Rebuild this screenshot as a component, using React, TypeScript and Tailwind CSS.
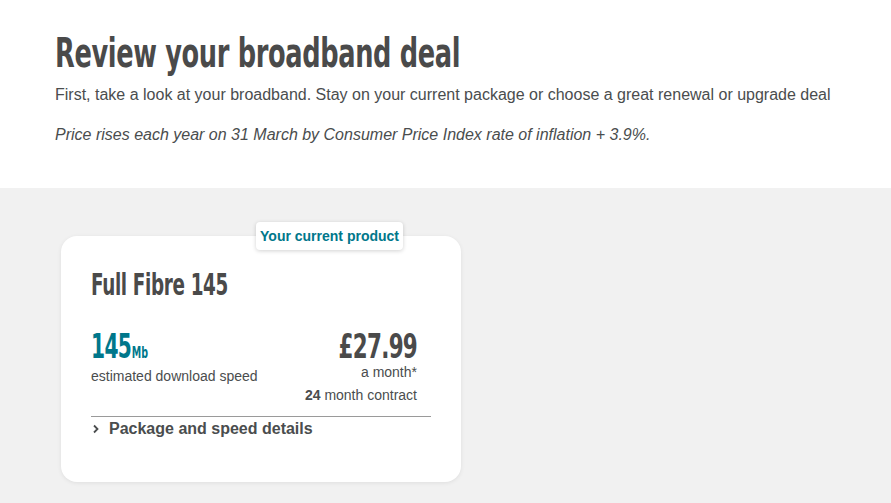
import React from "react";

const condensed = { fontFamily: '"DejaVu Sans Condensed", "DejaVu Sans", sans-serif' };

export default function App() {
  return (
    <div className="min-h-screen bg-[#f1f1f1] font-['Liberation_Sans',Arial,sans-serif] text-[#4a4d4e]">
      <header className="bg-white px-[55px] pt-[31px] pb-[41px]">
        <h1
          style={condensed}
          className="text-[40px] font-bold leading-[44px] tracking-[-0.5px] text-[#4a4a4a]"
        >
          <span className="inline-block origin-left scale-x-[0.713]">Review your broadband deal</span>
        </h1>
        <p className="mt-[8px] text-[16px] leading-[24px]">
          First, take a look at your broadband. Stay on your current package or choose a great renewal or upgrade deal
        </p>
        <p className="mt-[16px] text-[16px] italic leading-[24px]">
          Price rises each year on 31 March by Consumer Price Index rate of inflation + 3.9%.
        </p>
      </header>

      <section className="px-[61px] pt-[48px]">
        <div className="relative w-[400px] rounded-[16px] bg-white px-[30px] pt-[32px] pb-[41px] shadow-[0_1px_4px_rgba(0,0,0,0.08)]">
          <span className="absolute -top-[14px] right-[58px] rounded-[4px] bg-white px-[4px] py-[4px] text-[14px] font-bold leading-[20px] text-[#00778b] shadow-[0_1px_4px_rgba(0,0,0,0.18)]">
            Your current product
          </span>

          <h2 style={condensed} className="text-[30px] font-bold leading-[34px] tracking-[-0.5px] text-[#4a4a4a]">
            <span className="inline-block origin-left scale-x-[0.68]">Full Fibre 145</span>
          </h2>

          <div className="mt-[27px] flex items-start justify-between pr-[14px]">
            <div>
              <div style={condensed} className="flex items-end font-bold text-[#00778b]">
                <span className="inline-block origin-left scale-x-[0.66] text-[34px] leading-[34px] tracking-[-1px]">
                  145
                  <span className="ml-[1px] text-[16px] leading-[16px] tracking-[0px]">Mb</span>
                </span>
              </div>
              <div className="mt-[4px] text-[14px] leading-[18px]">estimated download speed</div>
            </div>
            <div className="text-right">
              <div style={condensed} className="text-[34px] font-bold leading-[34px] tracking-[-1px] text-[#4a4a4a]">
                <span className="inline-block origin-right scale-x-[0.7]">£27.99</span>
              </div>
              <div className="text-[14px] leading-[18px]">a month*</div>
              <div className="mt-[5px] text-[14px] leading-[18px]">
                <span className="font-bold">24</span> month contract
              </div>
            </div>
          </div>

          <div className="mt-[12px] border-t border-[#9a9a9a]">
            <button className="flex items-center gap-[8px] text-[16px] font-bold leading-[24px] text-[#4a4d4e]">
              <svg width="10" height="10" viewBox="0 0 10 10">
                <path d="M3 1.5 L6.5 5 L3 8.5" fill="none" stroke="#4a4d4e" strokeWidth="1.8" />
              </svg>
              Package and speed details
            </button>
          </div>
        </div>
      </section>
    </div>
  );
}
